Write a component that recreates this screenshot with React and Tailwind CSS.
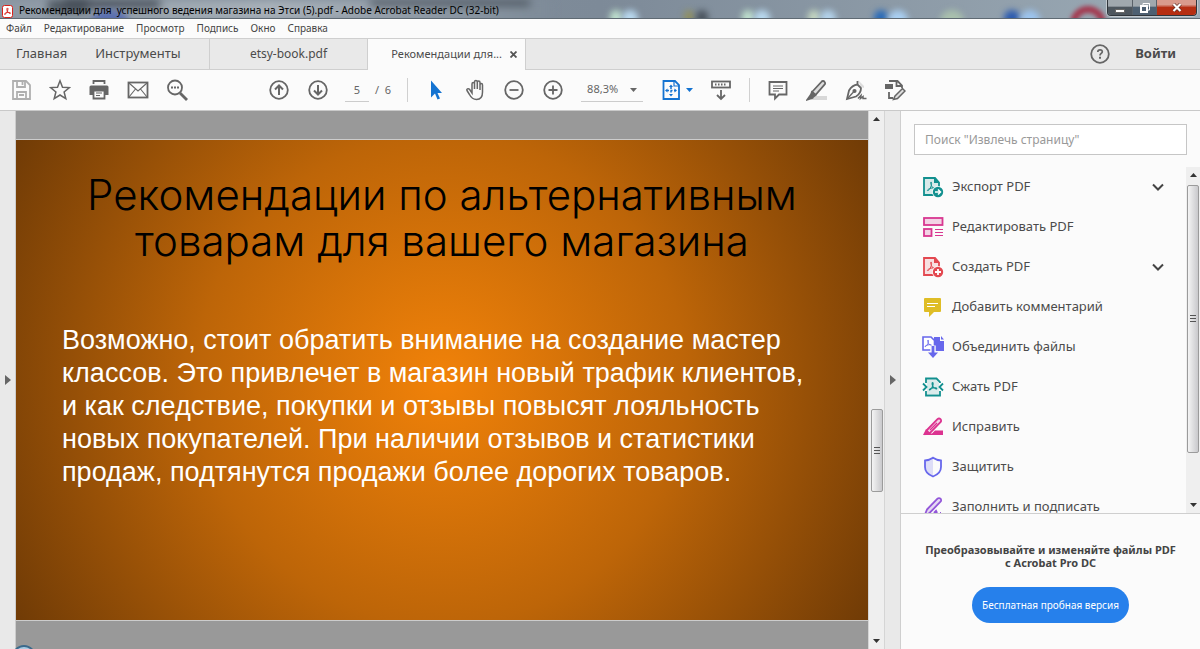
import React from 'react';

const menuItems = ['Файл', 'Редактирование', 'Просмотр', 'Подпись', 'Окно', 'Справка'];

// Blurred desktop icons that show through the glass title bar
const glassSpots = [
  { x: 90, color: '#5a6fb0', w: 40 },
  { x: 610, color: '#bfe0cd', w: 12 },
  { x: 622, color: '#b8d8ee', w: 16 },
  { x: 684, color: '#8f8f62', w: 10 },
  { x: 696, color: '#4c555f', w: 12 },
  { x: 742, color: '#bfe0cd', w: 12 },
  { x: 754, color: '#b8d8ee', w: 16 },
  { x: 808, color: '#c4d6c0', w: 12 },
  { x: 820, color: '#b3d2ea', w: 16 },
  { x: 874, color: '#2a6bb8', w: 14 },
  { x: 888, color: '#a9cff2', w: 20 },
  { x: 940, color: '#a9c0ad', w: 24 },
  { x: 1004, color: '#2d5cb0', w: 16 },
  { x: 1020, color: '#9cc4ef', w: 20 },
];

const tools = [
  { label: 'Экспорт PDF', icon: 'export', more: true },
  { label: 'Редактировать PDF', icon: 'edit' },
  { label: 'Создать PDF', icon: 'create', more: true },
  { label: 'Добавить комментарий', icon: 'comment' },
  { label: 'Объединить файлы', icon: 'combine' },
  { label: 'Сжать PDF', icon: 'compress' },
  { label: 'Исправить', icon: 'redact' },
  { label: 'Защитить', icon: 'protect' },
  { label: 'Заполнить и подписать', icon: 'fill' },
];

const Svg = ({ size = 22, children, className = '' }) => (
  <svg
    width={size}
    height={size}
    viewBox="0 0 22 22"
    fill="none"
    stroke="currentColor"
    strokeWidth="1.8"
    className={`shrink-0 ${className}`}
    aria-hidden="true"
  >
    {children}
  </svg>
);

const IconButton = ({ label, children, className = '' }) => (
  <button type="button" aria-label={label} className={`flex shrink-0 items-center justify-center text-[#666] ${className}`}>
    {children}
  </button>
);

const PdfMark = () => (
  <path d="M9 6c1 0 .6 3-.2 5-.8 2-2.6 4-3.300 3.600-.7-.6 2-2.300 4.500-2.600 2-.2 4.200 0 4 .9-.3.900-2.500-.3-3.900-2.200C9 9 8.200 6.100 9 6z" strokeWidth="1" />
);

const ToolIcon = ({ name }) => {
  switch (name) {
    case 'export':
    case 'create':
      return (
        <Svg className={name === 'export' ? 'text-[#12908f]' : 'text-[#e34850]'}>
          <path d="M2 2h11l4 4.500V19H2z" fill="currentColor" fillOpacity="0.15" />
          <path d="M12 1.500L17.500 7H12z" fill="currentColor" stroke="none" />
          <PdfMark />
          <circle cx="16" cy="16" r="6" fill="#fbfbfb" stroke="none" />
          <circle cx="16" cy="16" r="5.200" fill="currentColor" stroke="none" />
          {name === 'export' ? (
            <path d="M13 16h5M16 13.500l2.500 2.500-2.500 2.500" stroke="#fff" strokeWidth="1.500" />
          ) : (
            <path d="M13 16h6M16 13v6" stroke="#fff" />
          )}
        </Svg>
      );
    case 'edit':
      return (
        <Svg className="text-[#d83790]">
          <rect x="2" y="2" width="18.500" height="7" fill="currentColor" fillOpacity="0.2" />
          <rect x="2" y="13" width="7.500" height="7" fill="currentColor" fillOpacity="0.2" />
          <path d="M13 13.500h8M13 16.500h8M13 19.500h8" strokeWidth="1" />
        </Svg>
      );
    case 'comment':
      return (
        <Svg className="text-[#dfbd26]">
          <path d="M3 2h15a1 1 0 0 1 1 1v12a1 1 0 0 1-1 1h-6l-5 5v-5H3a1 1 0 0 1-1-1V3a1 1 0 0 1 1-1z" fill="currentColor" stroke="none" />
          <path d="M5 7.500h11M5 10.500h8" stroke="#fff" strokeWidth="1.200" />
        </Svg>
      );
    case 'combine':
      return (
        <Svg className="text-[#6767ec]">
          <path d="M12 1h6v4h4v10H12z" fill="currentColor" stroke="none" />
          <path d="M19 0l3 3.500h-3z" fill="currentColor" stroke="none" />
          <path d="M1 1h8l3.500 3.500V14H1z" fill="#fff" strokeWidth="1.600" />
          <path d="M6 4c.8 0 .5 2.500-.4 4.300C5 9.500 3.500 11 3 10.500 3 9.700 5 9 7 8.700c1.500-.2 3 .2 2.800.8-.4.600-2.200-.6-3.100-1.900C6 6.500 5.300 4.200 6 4z" strokeWidth="0.900" />
          <path d="M11 9.500V17" stroke="#fbfbfb" strokeWidth="5.500" />
          <path d="M11 10v8" strokeWidth="2.800" />
          <path d="M6 16.500h10L11 22z" fill="currentColor" stroke="none" />
        </Svg>
      );
    case 'compress':
      return (
        <Svg className="text-[#12908f]">
          <path d="M4 7V2.500h10.500L18 6v1M4 15v4.500h14V15" />
          <path d="M5 3.500h9l3 3.500v11H5z" fill="currentColor" fillOpacity="0.14" stroke="none" />
          <path d="M1 7.500L4.500 11 1 14.500M21 7.500L17.500 11l3.500 3.500" />
          <path d="M10.500 6.500c1 0 .6 2.800-.2 4.500-.6 1.400-2.200 3.300-2.900 2.900-.5-.6 1.900-1.900 3.900-2.100 1.800-.2 3.700.2 3.400.9-.4.800-2.300-.5-3.500-1.900-.9-1.200-1.600-4.100-.7-4.300z" strokeWidth="1.200" />
        </Svg>
      );
    case 'redact':
      return (
        <Svg className="text-[#dc3390]">
          <path d="M5 14L15.500 3.200a2 2 0 0 1 3 3L8.500 16.500 4 18z" fill="currentColor" fillOpacity="0.2" />
          <path d="M8 14l7-7" strokeWidth="1.200" />
          <path d="M4 13l5 4.500h1l3-3h8V19H1z" fill="currentColor" stroke="none" />
        </Svg>
      );
    case 'protect':
      return (
        <Svg className="text-[#6767ec]">
          <path d="M11 2v18c-5-2-8-5-8-9V4.500c3.500 0 5.500-1 8-2.500z" fill="currentColor" fillOpacity="0.2" stroke="none" />
          <path d="M11 1.700c2.500 1.700 5 2.600 8 2.800V11c0 4.500-3.200 7.700-8 9.500-4.800-1.800-8-5-8-9.500V4.500c3-.2 5.500-1.100 8-2.800z" />
        </Svg>
      );
    default:
      return (
        <Svg className="text-[#9256d9]">
          <path d="M5 13.500L15.500 2.700a2 2 0 0 1 3 3L8 16.500 2 21z" fill="currentColor" fillOpacity="0.2" />
          <path d="M12 17l2-2 1 2M18 17h1" strokeWidth="2" />
        </Svg>
      );
  }
};

const Arrow = ({ dir, color = '#333' }) => (
  <svg width="7" height="4" viewBox="0 0 7 4" className="shrink-0" aria-hidden="true">
    <path d={dir === 'up' ? 'M0 4L3.500 0L7 4z' : 'M0 0h7L3.500 4z'} fill={color} />
  </svg>
);

const Thumb = ({ className }) => (
  <div className={`flex w-3 items-center justify-center rounded-xs border border-[#9b9b9b] bg-linear-to-r from-[#f4f4f4] to-[#c9c9cc] ${className}`}>
    <span className="h-2 w-1.5 bg-[repeating-linear-gradient(#555_0_1px,transparent_1px_3px)]" />
  </div>
);

const Divider = () => <div className="h-6 w-px shrink-0 bg-[#d0d0d0]" />;

const TitleBar = () => (
  <header className="relative flex h-[19px] shrink-0 items-start justify-between overflow-hidden border-b border-[#5f6a73] bg-linear-to-r from-[#87939f] via-[#7d8a98] to-[#9cabb6]">
    <div className="absolute inset-0">
      <div className="absolute -left-2 top-0 h-5 w-[560px] bg-linear-to-r from-[#8c98a4] via-[#a9b2ba] to-[#7e8b98] blur-xs" />
      <div className="absolute left-12 top-0 h-3 w-10 bg-[#4d565f] blur-xs" />
      <div className="absolute left-16 top-0 h-2 w-24 bg-[#434b55] blur-xs" />
      <div className="absolute left-[370px] top-0 h-1.5 w-40 bg-[#4a535d] blur-xs" />
      {glassSpots.map((spot) => (
        <span
          key={spot.x}
          className="absolute top-2.5 h-4 rounded-t-full blur-[3px]"
          style={{ left: spot.x, width: spot.w, backgroundColor: spot.color }}
        />
      ))}
      <span className="absolute left-[1070px] top-1.5 size-9 rounded-full border-7 border-[#a33a50] blur-[2px]" />
    </div>
    <div className="relative flex items-center gap-1.5 pl-0.5">
      <svg width="11" height="13" viewBox="0 0 11 13" className="mt-1 shrink-0" aria-hidden="true">
        <rect x="0.5" y="0.5" width="10" height="12" rx="2" fill="#fff" stroke="#d9221c" />
        <path d="M5.500 3c.8 0 .4 2-.2 3.500C4.600 8 3.300 9.700 2.600 9.300 2.200 8.500 4 7.600 5.800 7.400c1.500-.1 3 .2 2.700.9-.4.700-2-.4-3-1.700C4.800 5.500 4.600 3.200 5.500 3z" fill="none" stroke="#d9221c" />
      </svg>
      <h1 className="whitespace-pre pt-0.5 text-[10px] leading-4 text-black">
        {'Рекомендации для  успешного ведения магазина на Этси (5).pdf - Adobe Acrobat Reader DC (32-bit)'}
      </h1>
    </div>
    <div className="relative mr-[3px] flex h-4 shrink-0 overflow-hidden rounded-b border border-t-0 border-[#30363c] shadow-[0_0_0_1px_#c2c9cf]">
      <button type="button" aria-label="Свернуть" className="flex w-6 items-center justify-center bg-linear-to-b from-[#a0a8ae] from-40% to-[#4d565e] to-50%">
        <span className="mt-1.5 h-1 w-2.5 border border-[#666] bg-white" />
      </button>
      <button type="button" aria-label="Развернуть" className="flex w-6 items-center justify-center border-l border-[#596169] bg-linear-to-b from-[#a0a8ae] from-40% to-[#4d6072] to-50%">
        <svg width="12" height="12" viewBox="0 0 12 12" fill="none" stroke="#fff" aria-hidden="true">
          <path d="M4 3V1.500h6.500V8H9" />
          <rect x="2" y="4" width="6" height="6" strokeWidth="2" />
        </svg>
      </button>
      <button type="button" aria-label="Закрыть" className="flex w-10 items-center justify-center border-l border-[#596169] bg-linear-to-b from-[#d99a8c] from-30% to-[#b62e12] to-50%">
        <svg width="10" height="9" viewBox="0 0 10 9" fill="none" aria-hidden="true">
          <path d="M1.500 1l7 7M8.500 1l-7 7" stroke="#5b2a22" strokeWidth="3.500" />
          <path d="M1.500 1l7 7M8.500 1l-7 7" stroke="#fff" strokeWidth="2.200" />
        </svg>
      </button>
    </div>
  </header>
);

const TabBar = () => (
  <div className="flex h-8 shrink-0 items-stretch border-y border-[#cfcfcf] bg-[#e9e9e9] text-[#4b4b4b]">
    <div className="flex w-[210px] shrink-0 items-center gap-7 border-r border-[#cfcfcf] pl-4 text-[13px]">
      <button type="button">Главная</button>
      <button type="button">Инструменты</button>
    </div>
    <button type="button" className="w-[158px] shrink-0 border-r border-[#cfcfcf] text-xs">
      etsy-book.pdf
    </button>
    <div className="-mb-px flex w-[158px] shrink-0 items-center justify-end gap-2 border-r border-[#cfcfcf] bg-[#fbfbfb] pr-2 text-[11px]">
      <span className="whitespace-nowrap">Рекомендации для...</span>
      <button type="button" aria-label="Закрыть вкладку">
        <svg width="7" height="7" viewBox="0 0 7 7" stroke="#555" strokeWidth="1.800" aria-hidden="true">
          <path d="M.5.5l6 6M6.500.5l-6 6" />
        </svg>
      </button>
    </div>
    <div className="ml-auto flex shrink-0 items-center gap-6 pr-6">
      <IconButton label="Помощь">
        <Svg>
          <circle cx="11" cy="11" r="8.800" />
          <path d="M8.800 9c0-2.900 4.500-2.900 4.500-.3 0 1.700-2.300 1.800-2.300 3.800" strokeWidth="1.700" />
          <path d="M11 13.800v1.900" strokeWidth="2" />
        </Svg>
      </IconButton>
      <button type="button" className="text-[13px] font-bold">Войти</button>
    </div>
  </div>
);

const Toolbar = () => (
  <div className="flex h-[41px] shrink-0 items-center border-b border-[#c9c9c9] bg-[#fbfbfb] pl-2.5 text-[#666]">
    <div className="flex gap-[17px]">
      <IconButton label="Сохранить" className="opacity-50">
        <Svg>
          <path d="M3 2h13l4 4v14H3z" />
          <path d="M7 2v6h8V2M12.500 3v3M7 20v-7h9v7M9 16h5" />
        </Svg>
      </IconButton>
      <IconButton label="Избранное">
        <Svg>
          <path d="M11 1.800l2.500 6.400 6.900.4-5.300 4.400 1.700 6.700-5.800-3.700-5.800 3.700L6.900 13 1.600 8.600l6.900-.4z" strokeWidth="1.500" />
        </Svg>
      </IconButton>
      <IconButton label="Печать">
        <Svg>
          <path d="M5 1.500h12V5H5zM3 6.500h16a1.500 1.500 0 0 1 1.500 1.500v8H17v-5H5v5H1.500V8A1.500 1.500 0 0 1 3 6.500z" fill="currentColor" stroke="none" />
          <path d="M5.500 11.500h11v8h-11z" fill="#fbfbfb" />
          <path d="M8 14h6M8 16.500h4" strokeWidth="1.200" />
          <path d="M5.500 5V2h11v3" fill="#fbfbfb" />
        </Svg>
      </IconButton>
      <IconButton label="Электронная почта">
        <Svg>
          <rect x="1.500" y="3.500" width="19" height="15" />
          <path d="M2 4l9 8 9-8M2 18l6.500-8M20 18l-6.500-8" strokeWidth="1.100" />
        </Svg>
      </IconButton>
      <IconButton label="Найти">
        <Svg>
          <circle cx="9" cy="8.500" r="7" />
          <path d="M14 14l7 7" strokeWidth="2.800" />
          <path d="M5 8.500h8" strokeDasharray="2 1" />
        </Svg>
      </IconButton>
    </div>

    <div className="ml-20 flex shrink-0 items-center">
      <div className="flex gap-[17px]">
        <IconButton label="Предыдущая страница">
          <Svg>
            <circle cx="11" cy="11" r="8.800" />
            <path d="M11 16V6.500M7 10.500l4-4 4 4" strokeWidth="2" />
          </Svg>
        </IconButton>
        <IconButton label="Следующая страница">
          <Svg>
            <circle cx="11" cy="11" r="8.800" />
            <path d="M11 6v9.500M7 11.500l4 4 4-4" strokeWidth="2" />
          </Svg>
        </IconButton>
      </div>
      <label className="ml-4 mr-1.5 flex items-center gap-1.5 text-[11px]">
        <input aria-label="Номер страницы" defaultValue="5" className="h-6 w-6 border-b border-[#ccc] bg-transparent text-center outline-none" />
        <span>/&nbsp; 6</span>
      </label>
    </div>

    <div className="ml-2.5 flex shrink-0 items-center gap-[17px]">
      <Divider />
      <IconButton label="Выделение" className="text-[#1473d1]">
        <Svg>
          <path d="M6 1.500v17l4-4 2.500 6 2.500-1-2.500-5.500H17z" fill="currentColor" stroke="none" />
        </Svg>
      </IconButton>
      <IconButton label="Рука">
        <Svg>
          <path d="M6.500 14V5c0-2 2.500-2 2.500 0v5V3c0-2 2.800-2 2.800 0v7V3.500c0-2 2.700-2 2.700 0V11 6c0-2 2.500-2 2.500 0v7c0 5-2.500 7.500-6 7.500-4 0-5.500-2-7-5l-2.500-4c-.8-1.500 1.200-2.500 2.500-1.200z" transform="translate(1.500 0)" strokeWidth="1.500" />
        </Svg>
      </IconButton>
      <IconButton label="Уменьшить">
        <Svg>
          <circle cx="11" cy="11" r="8.800" />
          <path d="M6.500 11h9" />
        </Svg>
      </IconButton>
      <IconButton label="Увеличить">
        <Svg>
          <circle cx="11" cy="11" r="8.800" />
          <path d="M6.500 11h9M11 6.500v9" />
        </Svg>
      </IconButton>
      <div className="relative flex items-center text-[11px]">
        <select aria-label="Масштаб" defaultValue="88,3%" className="h-6 w-[62px] appearance-none border-b border-[#ccc] bg-transparent pl-1.5 outline-none">
          <option>88,3%</option>
        </select>
        <span className="pointer-events-none absolute right-1.5">
          <Arrow dir="down" color="#666" />
        </span>
      </div>
      <IconButton label="По размеру страницы" className="gap-1 text-[#1473d1]">
        <Svg>
          <path d="M3.500 2H15l4 4v14H3.500z" />
          <path d="M14 2v5h5" strokeWidth="1.200" />
          <path d="M11 8v7M7 11.500h8" strokeWidth="1.500" strokeDasharray="2 1.500" />
          <path d="M11 5.500l2 2.500H9zM11 17.500l2-2.500H9zM5 11.500l2.500-2v4zM17 11.500l-2.500-2v4z" fill="currentColor" stroke="none" />
        </Svg>
        <Arrow dir="down" color="#1473d1" />
      </IconButton>
      <IconButton label="Прокрутка">
        <Svg>
          <rect x="2" y="2.500" width="18" height="6" />
          <path d="M5 5.500h12" strokeDasharray="1.500 1.500" />
          <path d="M11 11V20M7 16l4 4 4-4" />
        </Svg>
      </IconButton>
      <Divider />
      <IconButton label="Комментарий">
        <Svg>
          <path d="M2.500 3h17v12.500H12l-4 4v-4H2.500z" />
          <path d="M6 7h10M6 9.500h10M6 12h6" strokeWidth="1" />
        </Svg>
      </IconButton>
      <IconButton label="Маркер">
        <Svg>
          <path d="M7 17h14v4H5z" fill="#d8d8d8" stroke="none" />
          <path d="M6 13L15.500 2.800a1.800 1.800 0 0 1 3 0 2 2 0 0 1 0 2.900L9.500 16z" fill="#ddd" />
          <path d="M6 13l3.500 3-3 2.500-2-2zM4 17l2 2-4.500 1.500z" fill="currentColor" />
        </Svg>
      </IconButton>
      <IconButton label="Подписать">
        <Svg>
          <path d="M13 1l6 6v2l-3-1z" fill="#ddd" stroke="none" />
          <path d="M12.500 5.500L16 9c0 4-1 6-5 8.500L2 20 4 11.500C6 8 8.500 6 12.500 5.500zM12.500 5.500V2" />
          <path d="M2.500 19.500l6-6.500" strokeWidth="1.300" />
          <circle cx="9.500" cy="12" r="1.200" fill="currentColor" />
          <path d="M13 19.500l3-3-.5 3 2.500-2v2h3.500" strokeWidth="1.500" />
        </Svg>
      </IconButton>
      <IconButton label="Другие инструменты">
        <Svg>
          <path d="M5 2h8.500L18 6.500V9M12.500 2v5H18M5 13v6h4" />
          <rect x="1" y="5" width="8" height="5" fill="currentColor" stroke="none" />
          <path d="M11 17l7.500-7.500 2.500 2.500-7.500 7.500-4 1z" fill="#ddd" strokeWidth="1.500" />
        </Svg>
      </IconButton>
    </div>
  </div>
);

const Slide = () => (
  <main className="min-w-0 flex-1 overflow-hidden bg-[#999]">
    <article className="mt-7 aspect-[852/482] border-y border-[#ccc] bg-[radial-gradient(circle,#f18209_0%,#bd6508_50%,#703b06_100%)] pt-8 font-['Liberation_Sans',sans-serif]">
      <h2 className="text-center font-['Inter',sans-serif] text-[42px] font-light leading-[46px] text-black">
        Рекомендации по альтернативным
        <br />
        товарам для вашего магазина
      </h2>
      <p className="mt-15 pl-[46px] text-[27px] leading-[33px] text-white">
        Возможно, стоит обратить внимание на создание мастер
        <br />
        классов. Это привлечет в магазин новый трафик клиентов,
        <br />
        и как следствие, покупки и отзывы повысят лояльность
        <br />
        новых покупателей. При наличии отзывов и статистики
        <br />
        продаж, подтянутся продажи более дорогих товаров.
      </p>
    </article>
  </main>
);

const SideTriangle = () => (
  <svg width="6" height="10" viewBox="0 0 6 10" aria-hidden="true">
    <path d="M0 0l6 5-6 5z" fill="#666" />
  </svg>
);

const ToolsPane = () => (
  <aside className="flex w-[300px] shrink-0 flex-col border-l border-[#cfcfcf] bg-[#fbfbfb]">
    <div className="px-[13px] pb-3 pt-[13px]">
      <input
        type="text"
        aria-label="Поиск инструментов"
        placeholder={'Поиск "Извлечь страницу"'}
        className="block h-[31px] w-full border border-[#c6c6c6] bg-white px-2.5 text-xs outline-none placeholder:text-[#999]"
      />
    </div>
    <div className="flex min-h-0 flex-1 overflow-hidden border-b border-[#cfcfcf] pl-[13px]">
      <ul className="min-w-0 flex-1">
        {tools.map((tool) => (
          <li key={tool.label} className="flex h-10 items-center pl-2 pr-[22px]">
            <button type="button" className="flex flex-1 items-center gap-2 text-left text-[13px] text-[#4b4b4b]">
              <ToolIcon name={tool.icon} />
              {tool.label}
            </button>
            {tool.more && (
              <svg width="12" height="8" viewBox="0 0 12 8" fill="none" stroke="#444" strokeWidth="2" aria-hidden="true">
                <path d="M1 1.500l5 5 5-5" />
              </svg>
            )}
          </li>
        ))}
      </ul>
      <div className="flex w-[14px] shrink-0 flex-col items-center bg-[#efefef] py-1.5">
        <Arrow dir="up" />
        <Thumb className="mt-2 h-[268px]" />
        <span className="mt-auto">
          <Arrow dir="down" />
        </span>
      </div>
    </div>
    <div className="flex h-[135px] shrink-0 flex-col items-center pt-[29px]">
      <p className="whitespace-nowrap text-center text-[11px] font-bold leading-[13px] text-[#444]">
        Преобразовывайте и изменяйте файлы PDF
        <br />
        с Acrobat Pro DC
      </p>
      <button type="button" className="mt-[18px] h-9 w-[157px] whitespace-nowrap rounded-full bg-[#2680eb] text-[10px] text-white">
        Бесплатная пробная версия
      </button>
    </div>
  </aside>
);

const App = () => (
  <div className="relative flex h-screen flex-col overflow-hidden bg-[#fbfbfb] font-['Noto_Sans',sans-serif]">
    <TitleBar />
    <nav className="flex h-[19px] shrink-0 items-center gap-3 bg-[#fbfbfb] pl-1.5 text-[10px] text-[#444]">
      {menuItems.map((item) => (
        <button key={item} type="button">{item}</button>
      ))}
    </nav>
    <TabBar />
    <Toolbar />
    <div className="flex min-h-0 flex-1">
      <button type="button" aria-label="Показать панель" className="flex w-4 shrink-0 items-center justify-center border-r border-[#ccc] bg-[#e9e9e9]">
        <SideTriangle />
      </button>
      <Slide />
      <div className="flex w-[17px] shrink-0 flex-col items-center border-x border-[#d5d5d5] bg-[#efefef] py-1.5">
        <Arrow dir="up" />
        <Thumb className="mt-72 h-[83px]" />
        <span className="mt-auto">
          <Arrow dir="down" />
        </span>
      </div>
      <button type="button" aria-label="Скрыть панель" className="flex w-[15px] shrink-0 items-center justify-center bg-[#e9e9e9]">
        <SideTriangle />
      </button>
      <ToolsPane />
    </div>
    {/* Top edge of the system start button */}
    <span className="absolute -bottom-5 left-3 size-6 rounded-full border-2 border-[#3b6a8c] bg-[#a9cbe2]" />
  </div>
);

export default App;
